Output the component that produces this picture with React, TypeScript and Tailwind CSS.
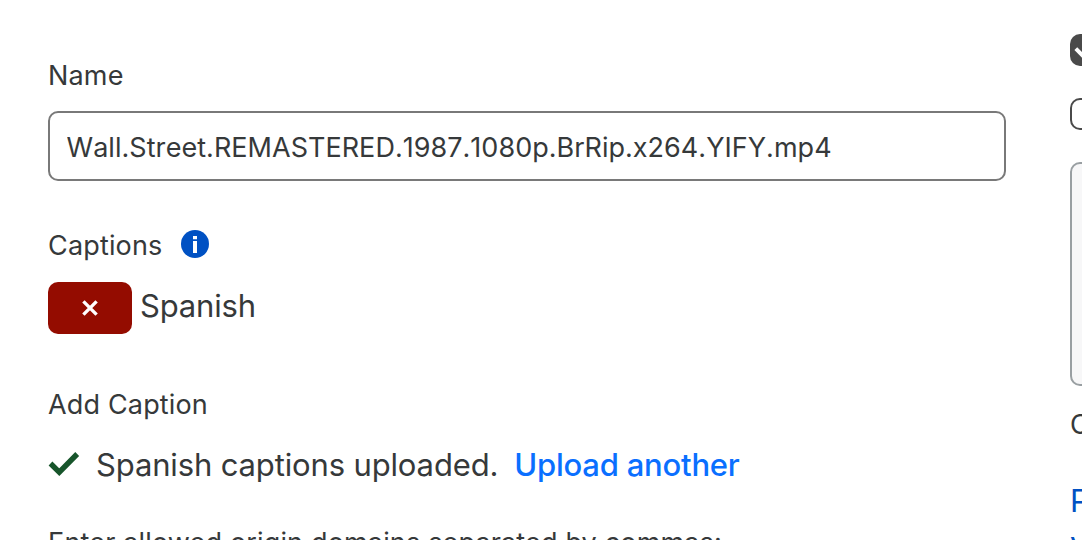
import type { ReactNode } from "react";

function Label({ children }: { children: ReactNode }) {
  return <div className="h-10 text-[27px] leading-10 tracking-[0.16px]">{children}</div>;
}

function InfoIcon() {
  return (
    <svg className="size-7" viewBox="0 0 28 28" aria-hidden="true">
      <circle cx="14" cy="14" r="14" fill="#0051c3" />
      <path d="M12 6h4v3.2h-4zM12 11h4v12h-4z" fill="#fff" />
    </svg>
  );
}

function CrossIcon() {
  return (
    <svg className="size-4" viewBox="0 0 16 16" aria-hidden="true">
      <path d="M1.4 1.4l13.2 13.2M14.6 1.4L1.4 14.6" stroke="#fff" strokeWidth="3.4" />
    </svg>
  );
}

function CheckIcon() {
  return (
    <svg className="-mt-[3px] h-6 w-8 shrink-0" viewBox="0 0 32 24" aria-hidden="true">
      <path d="M2.5 11.5l8.8 8.7L29.2 2" fill="none" stroke="#17552b" strokeWidth="5.4" />
    </svg>
  );
}

export default function App() {
  return (
    <div className="flex h-[540px] w-[1082px] overflow-hidden bg-white font-[Inter,sans-serif] whitespace-nowrap text-[#36393a]">
      <main className="w-[1070px] shrink-0 pt-14 pl-12">
        <Label>Name</Label>
        <input
          className="mt-[15px] block h-[70px] w-[958px] rounded-[10px] border-2 border-[#797979] bg-white px-[16.5px] pt-[3px] text-[27px] tracking-[0.03px] text-[#36393a] [font-kerning:none] outline-none"
          defaultValue="Wall.Street.REMASTERED.1987.1080p.BrRip.x264.YIFY.mp4"
          spellCheck={false}
        />
        <div className="mt-[45px] flex">
          <div className="w-[133px]">
            <Label>Captions</Label>
          </div>
          <span className="mt-1">
            <InfoIcon />
          </span>
        </div>
        <div className="mt-4 flex h-[52px]">
          <button
            className="flex h-[52px] w-[84px] items-center justify-center rounded-[10px] bg-[#940c00]"
            aria-label="Remove"
          >
            <CrossIcon />
          </button>
          <span className="ml-2 text-[31px] leading-[48px] tracking-[-0.17px]">Spanish</span>
        </div>
        <div className="mt-[51px]">
          <Label>Add Caption</Label>
        </div>
        <div className="mt-4 flex h-12 items-center text-[31px] leading-[48px] tracking-[-0.14px]">
          <CheckIcon />
          <span className="ml-4">Spanish captions uploaded.</span>
          <a className="ml-4 font-medium tracking-[-0.22px] text-[#0a6fff]">Upload another</a>
        </div>
        <div className="mt-[34px]">
          <Label>Enter allowed origin domains separated by commas:</Label>
        </div>
      </main>
      <aside className="w-[300px] shrink-0 pt-[34px]">
        <div className="flex size-8 items-center justify-center rounded-[10px] bg-[#4a4a4a]">
          <svg className="size-6" viewBox="0 0 24 24" aria-hidden="true">
            <path d="M1.8 10.6l7.8 7.8L22 5" fill="none" stroke="#fff" strokeWidth="4" />
          </svg>
        </div>
        <div className="mt-8 size-8 rounded-[10px] border-2 border-[#4a4a4a]" />
        <div className="mt-8 h-[224px] rounded-[10px] border-2 border-[#999fa2] bg-[#f7f7f8]" />
        <div className="mt-[19px]">
          <Label>C</Label>
        </div>
        <div className="mt-[35px] text-[31px] leading-[42px] text-[#0051c3]">
          <div>P</div>
          <div>v</div>
        </div>
      </aside>
    </div>
  );
}
